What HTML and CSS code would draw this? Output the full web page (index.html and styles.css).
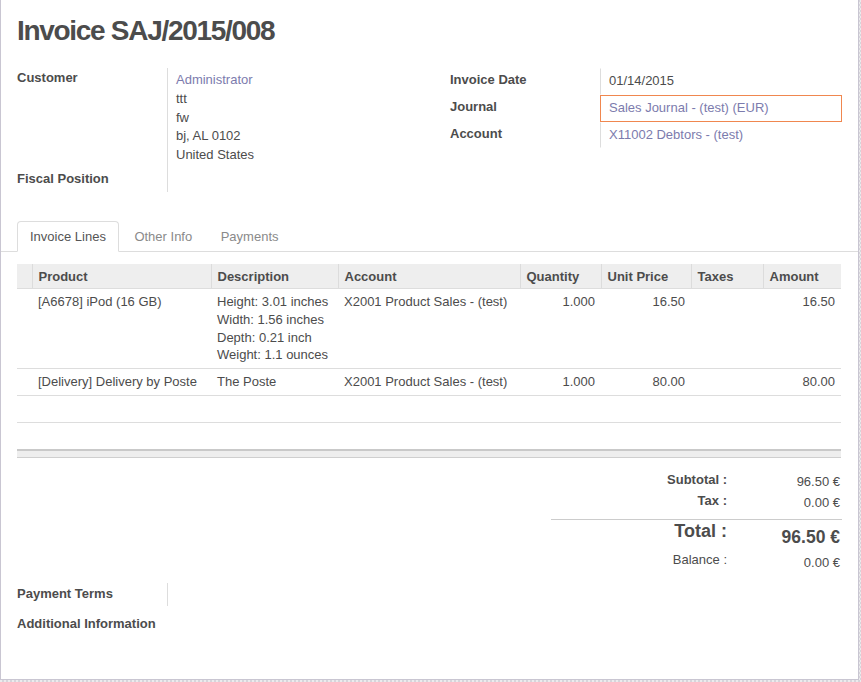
FILE: index.html
```html
<!DOCTYPE html>
<html>
<head>
<meta charset="utf-8">
<link rel="stylesheet" href="styles.css">
</head>
<body>
<div class="sheet">
  <h1 class="title">Invoice SAJ/2015/008</h1>

  <div class="groups">
    <div class="group left">
      <div class="label">Customer</div>
      <div class="value">
        <a class="link">Administrator</a><br>ttt<br>fw<br>bj, AL 0102<br>United States
      </div>
      <div class="label">Fiscal Position</div>
      <div class="value empty"></div>
    </div>
    <div class="group right">
      <div class="label">Invoice Date</div>
      <div class="value field">01/14/2015</div>
      <div class="label">Journal</div>
      <div class="value field focus"><a class="link">Sales Journal - (test) (EUR)</a></div>
      <div class="label">Account</div>
      <div class="value field"><a class="link">X11002 Debtors - (test)</a></div>
    </div>
  </div>

  <ul class="tabs">
    <li class="tab active">Invoice Lines</li>
    <li class="tab">Other Info</li>
    <li class="tab">Payments</li>
  </ul>

  <table class="lines">
    <colgroup>
      <col class="c-handle"><col class="c-product"><col class="c-desc"><col class="c-account">
      <col class="c-qty"><col class="c-price"><col class="c-taxes"><col class="c-amount">
    </colgroup>
    <thead>
      <tr>
        <th></th><th>Product</th><th>Description</th><th>Account</th>
        <th>Quantity</th><th>Unit Price</th><th>Taxes</th><th>Amount</th>
      </tr>
    </thead>
    <tbody>
      <tr>
        <td></td>
        <td>[A6678] iPod (16 GB)</td>
        <td>Height: 3.01 inches<br>Width: 1.56 inches<br>Depth: 0.21 inch<br>Weight: 1.1 ounces</td>
        <td>X2001 Product Sales - (test)</td>
        <td class="num">1.000</td>
        <td class="num">16.50</td>
        <td></td>
        <td class="num">16.50</td>
      </tr>
      <tr>
        <td></td>
        <td>[Delivery] Delivery by Poste</td>
        <td>The Poste</td>
        <td>X2001 Product Sales - (test)</td>
        <td class="num">1.000</td>
        <td class="num">80.00</td>
        <td></td>
        <td class="num">80.00</td>
      </tr>
      <tr class="blank"><td>&nbsp;</td><td></td><td></td><td></td><td></td><td></td><td></td><td></td></tr>
      <tr class="blank"><td>&nbsp;</td><td></td><td></td><td></td><td></td><td></td><td></td><td></td></tr>
    </tbody>
    <tfoot>
      <tr><td></td><td></td><td></td><td></td><td></td><td></td><td></td><td></td></tr>
    </tfoot>
  </table>

  <div class="totals-wrap">
    <table class="totals">
      <tr><td class="t-label b">Subtotal :</td><td class="t-value">96.50 €</td></tr>
      <tr class="tax"><td class="t-label b">Tax :</td><td class="t-value">0.00 €</td></tr>
      <tr class="grand"><td class="t-label">Total :</td><td class="t-value">96.50 €</td></tr>
      <tr class="balance"><td class="t-label">Balance :</td><td class="t-value">0.00 €</td></tr>
    </table>
  </div>

  <div class="group bottom">
    <div class="label">Payment Terms</div>
    <div class="value empty"></div>
  </div>
  <div class="label extra">Additional Information</div>
</div>
</body>
</html>
```

FILE: styles.css
```css
html, body {
  margin: 0;
  padding: 0;
}
body {
  width: 861px;
  height: 682px;
  overflow: hidden;
  background-color: #e4e4e7;
  background-image: repeating-conic-gradient(#d6d5db 0 25%, #ebebed 0 50%);
  background-size: 4px 4px;
  font-family: "Liberation Sans", Arial, sans-serif;
  font-size: 13px;
  line-height: 18.75px;
  color: #4c4c4c;
}
.sheet {
  box-sizing: border-box;
  width: 859px;
  height: 680px;
  background: #fff;
  border: 1px solid #c9c6d2;
  border-top: none;
  padding: 15px 16px 0;
}
.title {
  margin: 0;
  font-size: 28px;
  line-height: 32px;
  font-weight: bold;
  letter-spacing: -1.3px;
  color: #4c4c4c;
}
.link {
  color: #7c7bad;
  text-decoration: none;
}

/* field groups */
.groups {
  display: grid;
  grid-template-columns: 433px 1fr;
  margin-top: 21px;
}
.group {
  display: grid;
  grid-template-columns: 150px 1fr;
  align-content: start;
}
.label {
  font-weight: bold;
  padding-top: 1px;
}
.group.right .label {
  padding-top: 3px;
}
.value {
  border-left: 1px solid #ddd;
  padding: 3px 8px 4px;
}
.value.empty {
  min-height: 23px;
  padding: 0;
  box-sizing: border-box;
}
.value.field {
  border: 1px solid transparent;
  border-left-color: #ddd;
  padding: 3px 8px 3px;
}
.value.field.focus {
  border-color: #f0874f;
}

/* tabs */
.tabs {
  list-style: none;
  display: flex;
  margin: 29px -16px 0;
  padding: 0 16px;
  border-bottom: 1px solid #ddd;
}
.tab {
  padding: 6px 12px 4.5px;
  margin-right: 2.5px;
  margin-bottom: -1px;
  border: 1px solid transparent;
  border-radius: 4px 4px 0 0;
  color: #8a8a8a;
}
.tab.active {
  color: #555;
  background: #fff;
  border-color: #ddd;
  border-bottom-color: #fff;
}

/* lines table */
.lines {
  margin-top: 12px;
  width: 824px;
  table-layout: fixed;
  border-collapse: collapse;
  line-height: 17.8px;
}
.c-handle { width: 15px; }
.c-product { width: 179px; }
.c-desc { width: 127px; }
.c-account { width: 182px; }
.c-qty { width: 81px; }
.c-price { width: 90px; }
.c-taxes { width: 72px; }
.c-amount { width: 78px; }
.lines th {
  background: #eee;
  text-align: left;
  font-weight: bold;
  padding: 4px 6px 2px;
  line-height: 18px;
  border-left: 1px solid #dcdcdc;
  border-bottom: 1px solid #ddd;
  white-space: nowrap;
}
.lines th:first-child {
  border-left: none;
}
.lines td {
  padding: 4px 6px 4px;
  vertical-align: top;
  border-bottom: 1px solid #ddd;
  white-space: nowrap;
}
.lines td.num {
  text-align: right;
}
.lines tbody tr:last-child td {
  border-bottom: none;
}
.lines tfoot td {
  padding: 0;
  height: 6px;
  background: #eee;
  border-top: 2px solid #c9c9c9;
  border-bottom: 1px solid #cfcfcf;
}

/* totals */
.totals-wrap {
  display: flex;
  justify-content: flex-end;
  margin-top: 12px;
}
.totals {
  width: 291px;
  border-collapse: collapse;
  line-height: 18px;
}
.t-label {
  width: 176px;
  text-align: right;
  padding: 1px 0 1px;
  vertical-align: top;
}
.t-label.b {
  font-weight: bold;
}
.t-value {
  text-align: right;
  padding: 3px 2px 0 0;
  vertical-align: top;
}
.tax .t-label { padding-bottom: 9px; }
.tax .t-value { padding-bottom: 7px; }
.grand td {
  border-top: 1px solid #ccc;
  font-weight: bold;
  line-height: 20px;
}
.grand .t-label {
  font-size: 18px;
  padding: 1px 0 4px;
}
.grand .t-value {
  font-size: 17.5px;
  padding-top: 7px;
}
.balance .t-label {
  padding-top: 4px;
}
.balance .t-value {
  padding-top: 7px;
}

/* bottom */
.group.bottom {
  margin-top: 11px;
}
.group.bottom .label {
  padding-top: 2px;
}
.label.extra {
  margin-top: 9px;
  padding-top: 0;
}
```
